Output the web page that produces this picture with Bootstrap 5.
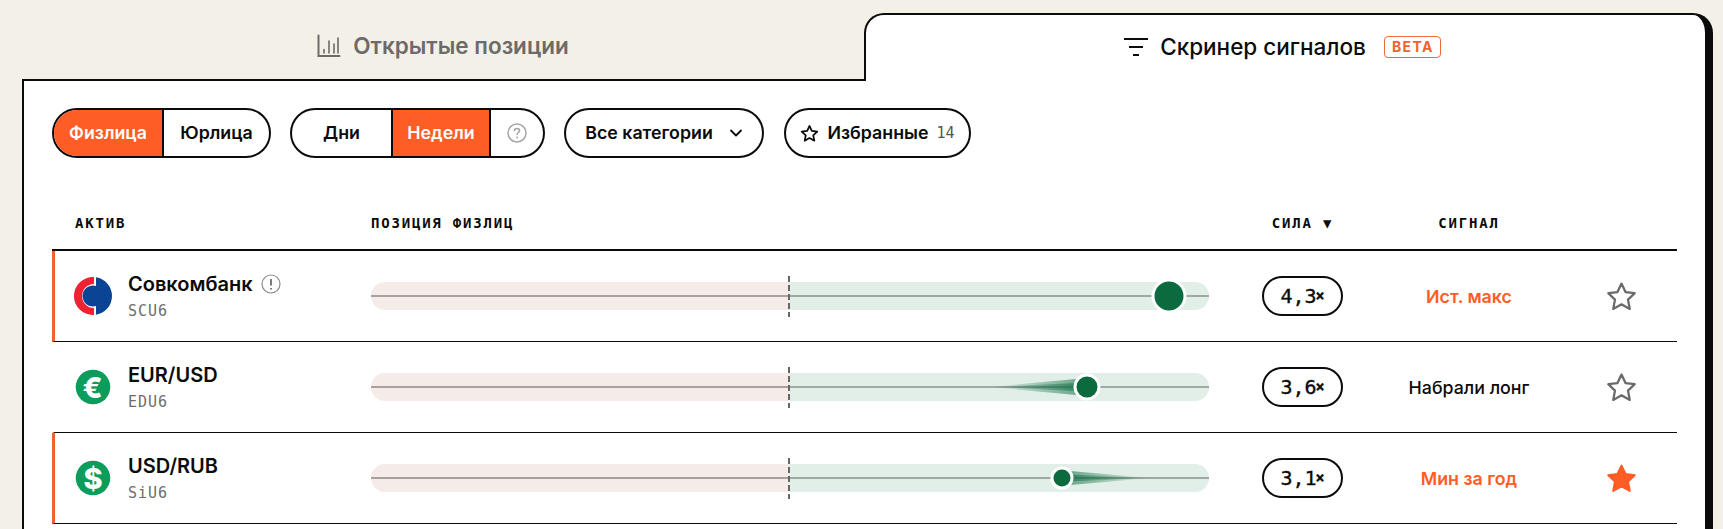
<!DOCTYPE html>
<html lang="ru">
<head>
    <meta charset='utf-8'>
    <title>Скринер сигналов</title>
    <meta name='viewport' content='width=device-width, initial-scale=1'>
    <link href="https://cdn.jsdelivr.net/npm/bootstrap@5.3.0/dist/css/bootstrap.min.css" rel="stylesheet">
    <style>
        html, body {
            height: 529px;
            overflow: hidden;
        }
        body {
            background: #f3f0e8;
            font-family: Inter, "Liberation Sans", sans-serif;
            color: #0b0b0b;
        }
        .page-wrap {
            padding: 13px 10px 0 22px;
        }
        .tab-off {
            width: 842px;
            height: 68px;
            border-bottom: 2px solid #0b0b0b;
            color: #6c6b68;
            font-size: 22.5px;
            font-weight: 600;
            gap: 12px;
            padding-bottom: 1px;
        }
        .tab-on {
            flex: 1;
            height: 68px;
            background: #fff;
            border: 2px solid #0b0b0b;
            border-right-width: 8px;
            border-bottom: 0;
            border-radius: 20px 20px 0 0;
            font-size: 22.5px;
            font-weight: 500;
            gap: 12px;
            margin-bottom: -2px;
            position: relative;
            padding-bottom: 2px;
            padding-right: 6px;
        }
        .beta-tag {
            border: 1px solid #f0693a;
            border-radius: 4px;
            color: #f0622f;
            font-size: 14px;
            font-weight: 700;
            letter-spacing: 1.4px;
            line-height: 20px;
            padding: 0 6px 0 7px;
            margin-left: 6px;
        }
        .panel-box {
            background: #fff;
            border-left: 2px solid #0b0b0b;
            border-right: 8px solid #0b0b0b;
            padding: 27px 28px 0 28px;
            height: 460px;
        }
        .pill-wrap {
            height: 50px;
            border: 2px solid #0b0b0b;
            border-radius: 25px;
            overflow: hidden;
            font-size: 17.8px;
            font-weight: 600;
            background: #fff;
        }
        .tool-gap {
            margin-left: 19px;
        }
        .pill-seg {
            height: 100%;
            display: flex;
            align-items: center;
            justify-content: center;
        }
        .pill-seg + .pill-seg {
            border-left: 2px solid #0b0b0b;
        }
        .seg-on {
            background: #ff5c26;
            color: #fff;
        }
        .fav-count {
            font-family: "DejaVu Sans Mono", monospace;
            font-size: 15px;
            font-weight: 400;
            color: #555;
        }
        .grid-line {
            display: grid;
            grid-template-columns: 319px 838px 187px 146px 1fr;
            align-items: center;
        }
        .head-line {
            margin-top: 51px;
            height: 42px;
            padding-bottom: 12px;
            border-bottom: 2px solid #0b0b0b;
            font-family: "DejaVu Sans Mono", monospace;
            font-size: 14px;
            font-weight: 700;
            letter-spacing: 1.8px;
        }
        .head-first {
            padding-left: 23px;
        }
        .data-line {
            grid-template-columns: 316px 838px 187px 146px 1fr;
            height: 91px;
            border-bottom: 1px solid #0b0b0b;
            border-left: 3px solid transparent;
        }
        .data-line.hot {
            border-left-color: #f0622f;
        }
        .asset-logo {
            width: 38px;
            height: 38px;
            margin-left: 19px;
            margin-right: 16px;
            flex: none;
        }
        .asset-name {
            font-size: 20px;
            font-weight: 600;
            line-height: 24px;
        }
        .asset-code {
            font-family: "DejaVu Sans Mono", monospace;
            font-size: 15px;
            letter-spacing: 1px;
            line-height: 18px;
            margin-top: 6px;
            color: #6d6d6d;
        }
        .bar-track {
            position: relative;
            height: 28px;
            border-radius: 14px;
            overflow: visible;
        }
        .bar-neg {
            width: 418px;
            background: #f5ebe9;
            border-radius: 14px 0 0 14px;
        }
        .bar-pos {
            flex: 1;
            background: #e2eee8;
            border-radius: 0 14px 14px 0;
        }
        .bar-mid {
            position: absolute;
            left: 0;
            right: 0;
            top: 13px;
            height: 2px;
            background: linear-gradient(90deg, #aaa09d 418px, #9fa8a2 418px);
        }
        .bar-zero {
            position: absolute;
            left: 417px;
            top: -6px;
            width: 2px;
            height: 41px;
            background: repeating-linear-gradient(180deg, #666 0 6px, transparent 6px 9px);
        }
        .bar-tail {
            position: absolute;
            left: 0;
            top: 0;
            width: 838px;
            height: 28px;
        }
        .bar-dot {
            position: absolute;
            top: 14px;
            transform: translate(-50%, -50%);
            border: 3px solid #fff;
            border-radius: 50%;
            background: #0b6b3f;
        }
        .force-pill {
            width: 81px;
            height: 40px;
            border: 2px solid #0b0b0b;
            border-radius: 20px;
            font-family: "DejaVu Sans Mono", monospace;
            font-size: 20px;
            -webkit-text-stroke: .35px #0b0b0b;
        }
        .force-x {
            font-size: 15px;
            font-weight: 700;
            margin-left: -1px;
        }
        .signal-text {
            font-size: 17.8px;
            font-weight: 500;
            white-space: nowrap;
            padding-top: 3px;
        }
        .signal-hot {
            color: #ff5c26;
            font-weight: 600;
        }
        .star-cell {
            padding-left: 64px;
        }
    </style>
</head>
<body>
    <div class="page-wrap">
        <div class="d-flex">
            <div class="tab-off d-flex align-items-center justify-content-center">
                <svg width="24" height="24" viewBox="0 0 24 24" fill="none" stroke="#6c6b68" stroke-width="2" stroke-linecap="round">
                    <path d="M1.5 1.500V22H22.500"/>
                    <path d="M7 15.500V19M12 7V19M17 10V19M21 4V19" stroke-width="1.600"/>
                </svg>
                <span>Открытые позиции</span>
            </div>
            <div class="tab-on d-flex align-items-center justify-content-center">
                <svg width="24" height="20" viewBox="0 0 24 20" fill="none" stroke="#0b0b0b" stroke-width="2.200">
                    <path d="M0 2H24M5 10H19M9 18H15"/>
                </svg>
                <span>Скринер сигналов</span>
                <span class="beta-tag">BETA</span>
            </div>
        </div>
        <div class="panel-box">
            <div class="d-flex align-items-center tools-row">
                <div class="pill-wrap d-flex">
                    <div class="pill-seg seg-on" style="width:108px">Физлица</div>
                    <div class="pill-seg" style="width:107px">Юрлица</div>
                </div>
                <div class="pill-wrap d-flex tool-gap">
                    <div class="pill-seg" style="width:99px">Дни</div>
                    <div class="pill-seg seg-on" style="width:98px">Недели</div>
                    <div class="pill-seg" style="width:54px">
                        <svg width="20" height="20" viewBox="0 0 20 20" fill="none" stroke="#a5a5a5" stroke-width="1.500" stroke-linecap="round">
                            <circle cx="10" cy="10" r="9"/>
                            <path d="M7.400 7.800C7.400 6.300 8.600 5.400 10 5.400C11.500 5.400 12.600 6.400 12.600 7.700C12.600 9.400 10 9.600 10 11.600"/>
                            <path d="M10 14.500V14.600" stroke-width="2"/>
                        </svg>
                    </div>
                </div>
                <div class="pill-wrap d-flex align-items-center justify-content-center tool-gap" style="width:200px">
                    <span>Все категории</span>
                    <svg class="ms-3" width="14" height="8" viewBox="0 0 14 8" fill="none" stroke="#0b0b0b" stroke-width="1.800" stroke-linecap="round" stroke-linejoin="round">
                        <path d="M2 1.500L7 6.500L12 1.500"/>
                    </svg>
                </div>
                <div class="pill-wrap d-flex align-items-center justify-content-center gap-2 tool-gap" style="width:187px;margin-left:20px">
                    <svg width="19" height="19" viewBox="0 0 24 24" fill="none" stroke="#0b0b0b" stroke-width="2.200" stroke-linejoin="round">
                        <path d="M12 2.500L14.900 8.800L21.800 9.600L16.700 14.300L18.100 21.100L12 17.700L5.900 21.100L7.300 14.300L2.200 9.600L9.100 8.800Z"/>
                    </svg>
                    <span>Избранные</span>
                    <span class="fav-count">14</span>
                </div>
            </div>

            <div class="grid-line head-line">
                <div class="head-first">АКТИВ</div>
                <div>ПОЗИЦИЯ ФИЗЛИЦ</div>
                <div class="text-center">СИЛА ▼</div>
                <div class="text-center">СИГНАЛ</div>
                <div></div>
            </div>
            <div id="signal-rows"></div>
        </div>
    </div>

    <script>
        const logos = {
            scb: `<svg class="asset-logo" viewBox="0 0 38 38">
                    <path d="M20 0.030A19 19 0 1 0 20 37.970V31A12 12 0 1 1 20 7Z" fill="#ee2233"/>
                    <path d="M22 0.240A19 19 0 0 1 22 37.760V29.060A10.500 10.500 0 1 1 22 8.940Z" fill="#0b4395"/>
                  </svg>`,
            eur: `<svg class="asset-logo" viewBox="0 0 38 38">
                    <circle cx="19" cy="19" r="17.300" fill="#0c9c5c"/>
                    <text x="18.500" y="29.500" text-anchor="middle" fill="#fff" font-family="Inter, sans-serif" font-weight="800" font-size="29">€</text>
                  </svg>`,
            usd: `<svg class="asset-logo" viewBox="0 0 38 38">
                    <circle cx="19" cy="19" r="17.300" fill="#0c9c5c"/>
                    <text x="19" y="29.500" text-anchor="middle" fill="#fff" font-family="Inter, sans-serif" font-weight="800" font-size="29">$</text>
                  </svg>`
        };

        const assets = [
            { name: "Совкомбанк", code: "SCU6", logo: "scb", hot: true, note: true, dotX: 798, dotSize: 35, tail: null, force: "4,3", signal: "Ист. макс", signalHot: true, fav: false },
            { name: "EUR/USD", code: "EDU6", logo: "eur", hot: false, note: false, dotX: 716, dotSize: 27, tail: 619, force: "3,6", signal: "Набрали лонг", signalHot: false, fav: false },
            { name: "USD/RUB", code: "SiU6", logo: "usd", hot: true, note: false, dotX: 691, dotSize: 23, tail: 779, force: "3,1", signal: "Мин за год", signalHot: true, fav: true }
        ];

        function tailSvg(a, i) {
            if (a.tail === null) return "";
            const x = a.dotX, t = a.tail, h = a.dotSize / 3;
            return `<svg class="bar-tail" viewBox="0 0 838 28">
                <defs><linearGradient id="tg${i}" gradientUnits="userSpaceOnUse" x1="${t}" y1="0" x2="${x}" y2="0">
                    <stop offset="0" stop-color="#0b6b3f" stop-opacity="0"/>
                    <stop offset="1" stop-color="#0b6b3f" stop-opacity=".6"/>
                </linearGradient></defs>
                <polygon points="${t},14 ${x},${14 - h} ${x},${14 + h}" fill="url(#tg${i})"/>
                <polygon points="${t},14 ${x},${14 - h / 2} ${x},${14 + h / 2}" fill="url(#tg${i})"/>
            </svg>`;
        }

        function starSvg(fav) {
            const d = "M15 2.500L18.900 10.700L27.800 11.800L21.300 18L23 27L15 22.600L7 27L8.700 18L2.200 11.800L11.100 10.700Z";
            return fav
                ? `<svg width="31" height="31" viewBox="0 0 30 30"><path d="${d}" fill="#ff5c26" stroke="#ff5c26" stroke-width="2" stroke-linejoin="round"/></svg>`
                : `<svg width="31" height="31" viewBox="0 0 30 30"><path d="${d}" fill="none" stroke="#6a6a6a" stroke-width="2.200" stroke-linejoin="round"/></svg>`;
        }

        const noteIcon = `<svg class="ms-2" width="20" height="20" viewBox="0 0 20 20" fill="none" stroke="#8d8d8d" stroke-width="1.200">
                <circle cx="10" cy="10" r="9"/><path d="M10 5V11.500M10 14V15.500" stroke-width="1.800" stroke="#6d6d6d"/></svg>`;

        document.getElementById("signal-rows").innerHTML = assets.map((a, i) => `
            <div class="grid-line data-line${a.hot ? " hot" : ""}">
                <div class="d-flex align-items-center">
                    ${logos[a.logo]}
                    <div>
                        <div class="asset-name d-flex align-items-center">${a.name}${a.note ? noteIcon : ""}</div>
                        <div class="asset-code">${a.code}</div>
                    </div>
                </div>
                <div class="bar-track d-flex">
                    <div class="bar-neg"></div>
                    <div class="bar-pos"></div>
                    <div class="bar-mid"></div>
                    ${tailSvg(a, i)}
                    <div class="bar-zero"></div>
                    <div class="bar-dot" style="left:${a.dotX}px;width:${a.dotSize}px;height:${a.dotSize}px"></div>
                </div>
                <div class="d-flex justify-content-center">
                    <div class="force-pill d-flex align-items-center justify-content-center">${a.force}<span class="force-x">×</span></div>
                </div>
                <div class="signal-text text-center${a.signalHot ? " signal-hot" : ""}">${a.signal}</div>
                <div class="star-cell d-flex">${starSvg(a.fav)}</div>
            </div>
        `).join("");
    </script>

    <script src="https://cdn.jsdelivr.net/npm/bootstrap@5.3.0/dist/js/bootstrap.bundle.min.js"></script>
</body>
</html>
